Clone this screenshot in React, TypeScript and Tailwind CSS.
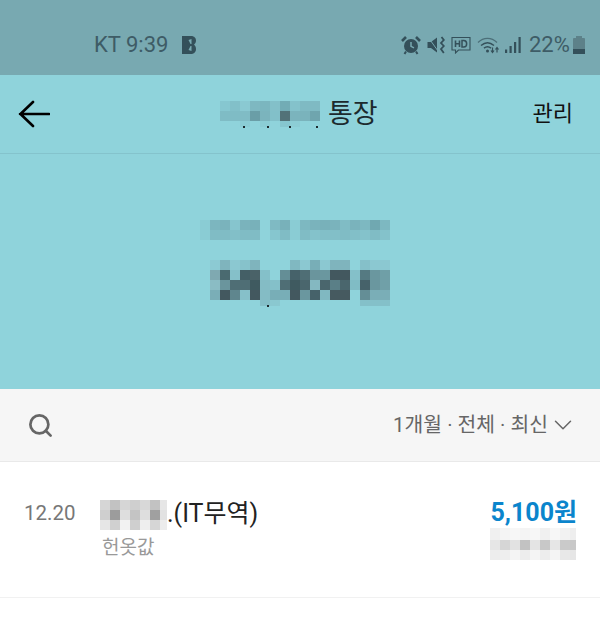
import { ChevronDown, Search } from "lucide-react";

const KR = "font-['Roboto','Noto_Sans_CJK_KR',sans-serif]";
const BG = "#8fd3db";

const titleBlur = [
  ["#86c7d0", "#82c0c9", "#8ac9d2", "#7eb8c1", "#7bb6bf", "#83c0c9", "#72acb5", "#84c2cb", "#7fbac3", "#7fbac3"],
  ["#7fbcc5", "#7fbcc5", "#80bcc5", "#6a9ea7", "#7bb4bd", "#82c0c9", "#527278", "#7bb4bd", "#7ab3bc", "#6fa5ae"],
  [BG, BG, "#8bcdd5", BG, "#8bcdd5", BG, "#86c6cf", "#8ccdd5", BG, BG],
];

const labelBlur = [
  ["#8accd4", "#7cb6bf", "#7ab3bc", "#86c5ce", "#7ab3bc", "#78b1ba", BG, "#7fbac3", "#78b1ba", "#8accd4", "#7db8c1", "#7ab3bc", "#78b1ba", "#7ab3bc", "#80bcc5", "#7ab3bc", "#7db8c1", "#70a8b1", "#7db8c1"],
  ["#8accd4", "#80bcc5", "#80bcc5", "#82bfc8", "#80bcc5", "#80bcc5", BG, "#86c6cf", "#80bcc5", "#8accd4", "#80bcc5", "#84c2cb", "#82bfc8", "#82bfc8", "#80bcc5", "#82bfc8", "#84c2cb", "#80bcc5", "#84c2cb"],
];

const amountBlur = [
  ["#8ccad3", "#7fb4bd", "#8bc8d1", "#86c2cb", "#7fb4bd", BG, BG, BG, "#80b8c1", "#8bc8d1", "#78aeb7", "#8bc8d1", "#7fb4bd", "#7fb4bd", BG, "#85c0c9", "#8bc8d1", "#8bc8d1"],
  ["#7fa9b1", "#4a6a70", "#85c0c9", "#445f66", "#4a6268", "#84c0c9", BG, "#648e96", "#46626a", "#4f6e75", "#6a959d", "#6a979f", "#43585f", "#43585f", "#84c0c9", "#557a82", "#6a979f", "#6f9fa7"],
  ["#8abcc4", "#6a959d", "#4f6e75", "#4f6e75", "#3f5a60", "#84bcc5", "#84c0c9", "#4f6e75", "#3f5a60", "#4a666d", "#84b8c1", "#4a666d", "#5a7f87", "#4a666d", "#80bcc5", "#46626a", "#6a979f", "#70a0a8"],
  ["#7aaeb7", "#43585f", "#5f868e", "#86c0c9", "#43585f", "#84bcc5", "#78aeb7", "#78aeb7", "#43585f", "#6a979f", "#46626a", "#80b8c1", "#465a60", "#465a60", BG, "#648e96", "#7aaeb7", "#7aaeb7"],
  [BG, BG, BG, BG, BG, "#84bfc8", "#8ac8d0", BG, BG, BG, BG, BG, BG, BG, BG, "#84c0c9", "#84c0c9", "#84c0c9"],
];

const nameBlur = [
  ["#d6d6d6", "#c2c2c2", "#d6d6d6", "#cfcfcf", "#d8d8d8", "#c2c2c2", "#e6e6e6"],
  ["#cfcfcf", "#9c9c9c", "#dedede", "#c4c4c4", "#dedede", "#a0a0a0", "#e2e2e2"],
  ["#e6e6e6", "#d0d0d0", "#f2f2f2", "#cfcfcf", "#eeeeee", "#d6d6d6", "#ececec"],
];

const subBlur = [
  ["#f0f0f0", "#f4f4f4", "#f7f7f7", "#f4f4f4", "#f7f7f7", "#f0f0f0", "#f7f7f7", "#f2f2f2", "#eeeeee"],
  ["#e6e6e6", "#d6d6d6", "#e2e2e2", "#c2c2c2", "#e4e4e4", "#c8c8c8", "#e6e6e6", "#cacaca", "#c8c8c8"],
  ["#ededed", "#eeeeee", "#f4f4f4", "#ededed", "#f4f4f4", "#ededed", "#f4f4f4", "#e8e8e8", "#e6e6e6"],
];

function Mosaic({ rows, heights }: { rows: string[][]; heights?: number[] }) {
  return (
    <div className="flex flex-col shrink-0">
      {rows.map((row, r) => (
        <div key={r} className="flex" style={{ height: heights?.[r] ?? 10 }}>
          {row.map((c, i) => (
            <div key={i} className="w-[10px] shrink-0" style={{ backgroundColor: c }} />
          ))}
        </div>
      ))}
    </div>
  );
}

function StatusIcons() {
  return (
    <div className="flex items-center text-[#34505a]">
      {/* alarm */}
      <svg width="20" height="20" viewBox="0 0 20 20" className="mr-[5px]">
        <circle cx="10" cy="11" r="7" fill="currentColor" />
        <path d="M10 7V11.3L13 12.8" stroke="#78a9b1" strokeWidth="1.5" fill="none" />
        <path d="M1 6 5 2M19 6 15 2" stroke="currentColor" strokeWidth="2.6" />
        <path d="M5 16.5 3.5 19M15 16.5 16.5 19" stroke="currentColor" strokeWidth="2" />
      </svg>
      {/* vibrate mute */}
      <svg width="19" height="20" viewBox="0 0 19 20" className="mr-[6px]">
        <path d="M1.5 7H5L11 2.5V17.5L5 13H1.5Z" fill="currentColor" />
        <path d="M2 2 12 16" stroke="#78a9b1" strokeWidth="1" fill="none" />
        <path d="M15.5 2 17.8 5 15 8 17.8 11 15 14 17.8 18" stroke="currentColor" strokeWidth="1.8" fill="none" />
      </svg>
      {/* hd call */}
      <svg width="20" height="18" viewBox="0 0 20 18" className="mr-[6px]">
        <path d="M1 1.5H19V14H7.5L4.5 17V14H1Z" stroke="currentColor" strokeWidth="1.1" fill="none" />
        <path d="M4.5 4.5V11M8.5 4.5V11M4.5 7.7H8.5" stroke="currentColor" strokeWidth="1.6" fill="none" />
        <path d="M11 4.5V11H12.8C16.6 11 16.6 4.5 12.8 4.5Z" stroke="currentColor" strokeWidth="1.5" fill="none" />
      </svg>
      {/* wifi */}
      <svg width="23" height="18" viewBox="0 0 23 18" className="mr-[5px]">
        <path d="M1 6.5C6.5 1 14.5 1 20 6.5" stroke="currentColor" strokeWidth="1.2" fill="none" opacity="0.65" />
        <path d="M4 9.5C8 6 13 6 17 9.5" stroke="currentColor" strokeWidth="1.4" fill="none" />
        <path d="M7 12.2C9 10.6 12 10.6 14 12.2" stroke="currentColor" strokeWidth="1.5" fill="none" />
        <circle cx="10.5" cy="15" r="1.5" fill="currentColor" />
        <path d="M15.5 11.5V16M14 14.5 15.5 16.5 17 14.5M20 16.5V12M18.5 13.5 20 11.5 21.5 13.5" stroke="currentColor" strokeWidth="1.2" fill="none" />
      </svg>
      {/* signal */}
      <svg width="16" height="18" viewBox="0 0 16 18" className="mr-[8px]">
        <rect x="0" y="13.5" width="2.2" height="3.5" fill="currentColor" />
        <rect x="4.5" y="10" width="2.2" height="7" fill="currentColor" />
        <rect x="9" y="6" width="2.2" height="11" fill="currentColor" />
        <rect x="13.5" y="1" width="2.2" height="16" fill="currentColor" />
      </svg>
      <span className="w-[39px] text-[22px] leading-none text-[#3e5c66] mr-[5px] whitespace-nowrap">22%</span>
      {/* battery */}
      <div className="flex flex-col items-center w-[12px] h-[18px]">
        <div className="w-[6px] h-[2px] bg-[#5d8189]" />
        <div className="w-[12px] h-[16px] bg-[#5d8189] rounded-[1px] flex flex-col justify-end">
          <div className="h-[5px] bg-[#34505a]" />
        </div>
      </div>
    </div>
  );
}

export default function App() {
  return (
    <div className={`w-[600px] h-[623px] overflow-hidden bg-white flex flex-col ${KR}`}>
      {/* Status bar */}
      <div className="h-[75px] bg-[#78a9b1] flex items-center justify-between pl-[94px] pr-[15px] pt-[30px] pb-[15px]">
        <div className="flex items-center">
          <span className="text-[22px] leading-none text-[#3e5c66]">KT 9:39</span>
          <svg width="14" height="18" viewBox="0 0 14 18" className="ml-[14px]">
            <path
              d="M0 0H9C12.4 0 14 2.2 14 4.6C14 6.4 13.2 7.8 12 8.8C13.3 9.8 14 11.2 14 13C14 15.8 12.2 18 9 18H0Z"
              fill="#34505a"
            />
            <path d="M6.5 4 9.5 3V8H8.5M8.5 10H9.5V15L6.5 14Z" fill="#78a9b1" />
          </svg>
        </div>
        <StatusIcons />
      </div>

      {/* Teal area */}
      <div className="h-[314px] bg-[#8fd3db] flex flex-col">
        <div className="h-[79px] border-b border-[#84c3cc] flex items-center pl-[18px] pr-[27px]">
          <svg width="32" height="28" viewBox="0 0 32 28" fill="none" className="text-black shrink-0">
            <path d="M2 14H31M15 2 2.5 14 15 26" stroke="currentColor" strokeWidth="2.6" strokeLinecap="round" strokeLinejoin="round" />
          </svg>
          <div className="flex items-center gap-[8px] ml-[170px]">
            <div className="relative">
              <Mosaic rows={titleBlur} heights={[10, 10, 6]} />
              <div className="absolute left-[23px] top-[25px] w-[2px] h-[2px] bg-[#1c2a2e]" />
              <div className="absolute left-[47px] top-[25px] w-[2px] h-[2px] bg-[#1c2a2e]" />
              <div className="absolute left-[69px] top-[25px] w-[2px] h-[2px] bg-[#1c2a2e]" />
              <div className="absolute left-[96px] top-[25px] w-[2px] h-[2px] bg-[#1c2a2e]" />
            </div>
            <span className="text-[27px] leading-none text-[#1c2a2e]">통장</span>
          </div>
          <span className="ml-auto text-[22px] leading-none text-[#111]">관리</span>
        </div>
        <div className="flex flex-col items-end pt-[66px] pr-[210px]">
          <Mosaic rows={labelBlur} />
          <div className="h-[20px]" />
          <div className="relative">
            <Mosaic rows={amountBlur} heights={[10, 10, 10, 10, 6]} />
            <div className="absolute left-[57px] top-[45px] w-[2px] h-[2px] bg-[#1c2a2e]" />
          </div>
        </div>
      </div>

      {/* Filter bar */}
      <div className="h-[73px] bg-[#f6f6f6] border-b border-[#e9e9e9] flex items-center justify-between pl-[27px] pr-[22px]">
        <Search size={27} strokeWidth={2.4} className="text-[#666]" />
        <div className="flex items-center">
          <span className="text-[20.4px] leading-none text-[#666]">1개월 · 전체 · 최신</span>
          <ChevronDown size={30} strokeWidth={1.2} className="text-[#666]" />
        </div>
      </div>

      {/* Transaction row */}
      <div className="h-[136px] border-b border-[#f1f1f1] flex items-start justify-between pt-[38px] pl-[24px] pr-[23px]">
        <div className="flex items-start">
          <span className="w-[76px] pt-[3px] text-[20.5px] leading-none text-[#777]">12.20</span>
          <div className="flex flex-col">
            <div className="flex items-start">
              <div className="w-[67px] overflow-hidden">
                <Mosaic rows={nameBlur} />
              </div>
              <span className="text-[25px] leading-none text-[#222] pt-[1px]">.(IT무역)</span>
            </div>
            <span className="text-[19px] leading-none text-[#999] pl-[2px] mt-[8px]">헌옷값</span>
          </div>
        </div>
        <div className="flex flex-col items-end">
          <span className="text-[25px] leading-none font-bold text-[#0b85cc]">5,100원</span>
          <div className="w-[86px] overflow-hidden mr-[1px] mt-[3px]">
            <Mosaic rows={subBlur} heights={[12, 10, 10]} />
          </div>
        </div>
      </div>
    </div>
  );
}
